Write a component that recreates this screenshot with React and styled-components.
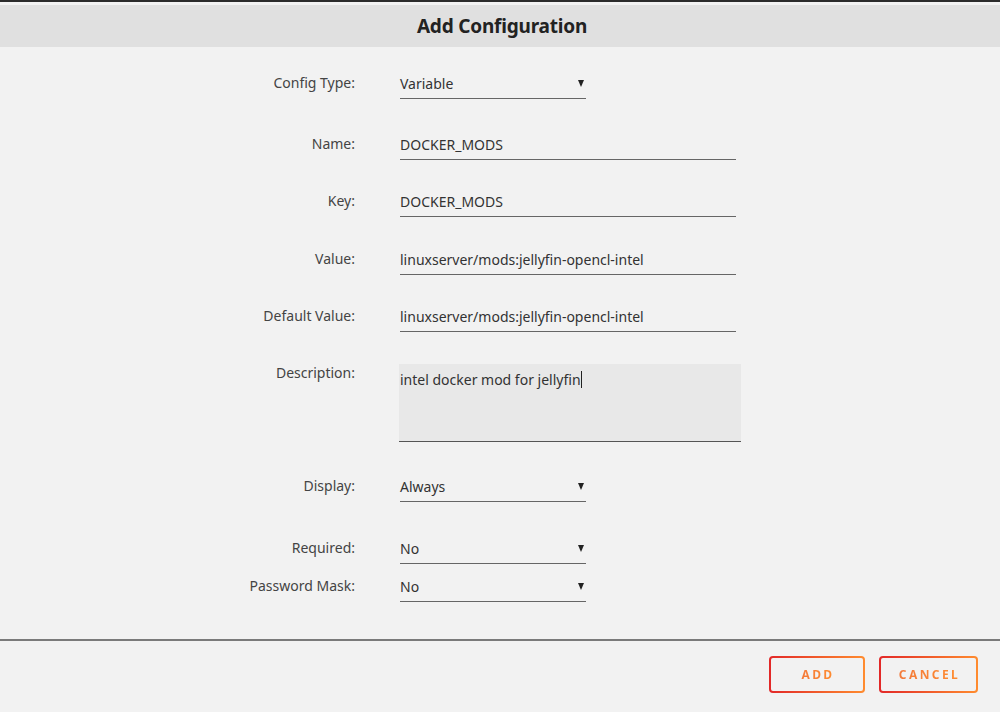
import React from "react";
import styled, { createGlobalStyle } from "styled-components";

const Global = createGlobalStyle`
  html, body { margin: 0; padding: 0; background: #f2f2f2; }
  body { font-family: "Noto Sans", "Liberation Sans", sans-serif; }
  * { box-sizing: border-box; }
`;

const Page = styled.div`
  width: 1000px;
  height: 712px;
  background: #f2f2f2;
  border-top: 2px solid #2b2b2b;
  display: flex;
  flex-direction: column;
  overflow: hidden;
`;

const Header = styled.div`
  margin-top: 3px;
  height: 42px;
  background: #e0e0e0;
  display: flex;
  align-items: center;
  justify-content: center;
  padding-left: 4px;
`;

const Title = styled.h2`
  margin: 0;
  font-size: 19px;
  font-weight: 700;
  color: #222;
  letter-spacing: -0.2px;
`;

const Form = styled.div`
  flex: 1;
  padding-top: 21px;
  display: flex;
  flex-direction: column;
`;

const Row = styled.div`
  display: grid;
  grid-template-columns: 355px auto;
  column-gap: 45px;
  align-items: ${(p) => (p.$top ? "start" : "center")};
  margin-top: ${(p) => p.$mt || 0}px;
`;

const Label = styled.label`
  text-align: right;
  font-size: 14px;
  color: #444;
  margin-top: ${(p) => (p.$top ? "-1px" : "-2px")};
`;

const Field = styled.div`
  width: ${(p) => p.$w}px;
  height: 31px;
  border-bottom: 1px solid #666;
  display: flex;
  align-items: center;
  justify-content: space-between;
  font-size: 14px;
  color: #333;
`;

const Arrow = styled.span`
  width: 0;
  height: 0;
  margin-right: 2px;
  border-left: 3.5px solid transparent;
  border-right: 3.5px solid transparent;
  border-top: 7px solid #222;
`;

const TextArea = styled.div`
  width: 342px;
  height: 78px;
  margin-left: -1px;
  background: #e8e8e8;
  border-bottom: 1px solid #555;
  padding: 6px 1px;
  font-size: 14px;
  color: #333;
`;

const Caret = styled.span`
  display: inline-block;
  width: 1px;
  height: 17px;
  background: #222;
  vertical-align: -3px;
`;

const Footer = styled.div`
  height: 73px;
  border-top: 2px solid #7a7a7a;
  display: flex;
  justify-content: flex-end;
  align-items: flex-start;
  gap: 14px;
  padding: 15px 22px 0 0;
`;

const Button = styled.button`
  width: ${(p) => p.$w}px;
  height: 37px;
  border: 2px solid transparent;
  border-radius: 4px;
  background:
    linear-gradient(#f2f2f2, #f2f2f2) padding-box,
    linear-gradient(90deg, #e22828 0%, #ff8c2f 100%) border-box;
  font-family: "Noto Sans", "Liberation Sans", sans-serif;
  font-size: 12px;
  font-weight: 700;
  letter-spacing: 2.4px;
  padding: 0 0 0 2px;
  cursor: pointer;
`;

const ButtonText = styled.span`
  background: linear-gradient(90deg, #f37a3a 0%, #ff8c2f 100%);
  -webkit-background-clip: text;
  background-clip: text;
  color: transparent;
`;

const Select = ({ value }) => (
  <Field $w={186}>
    <span>{value}</span>
    <Arrow />
  </Field>
);

export default function App() {
  return (
    <>
      <Global />
      <Page>
        <Header>
          <Title>Add Configuration</Title>
        </Header>
        <Form>
          <Row>
            <Label>Config Type:</Label>
            <Select value="Variable" />
          </Row>
          <Row $mt={30}>
            <Label>Name:</Label>
            <Field $w={336}>DOCKER_MODS</Field>
          </Row>
          <Row $mt={26}>
            <Label>Key:</Label>
            <Field $w={336}>DOCKER_MODS</Field>
          </Row>
          <Row $mt={27}>
            <Label>Value:</Label>
            <Field $w={336}>linuxserver/mods:jellyfin-opencl-intel</Field>
          </Row>
          <Row $mt={26}>
            <Label>Default Value:</Label>
            <Field $w={336}>linuxserver/mods:jellyfin-opencl-intel</Field>
          </Row>
          <Row $mt={32} $top>
            <Label $top>Description:</Label>
            <TextArea>
              intel docker mod for jellyfin
              <Caret />
            </TextArea>
          </Row>
          <Row $mt={29}>
            <Label>Display:</Label>
            <Select value="Always" />
          </Row>
          <Row $mt={31}>
            <Label>Required:</Label>
            <Select value="No" />
          </Row>
          <Row $mt={7}>
            <Label>Password Mask:</Label>
            <Select value="No" />
          </Row>
        </Form>
        <Footer>
          <Button $w={96}>
            <ButtonText>ADD</ButtonText>
          </Button>
          <Button $w={99}>
            <ButtonText>CANCEL</ButtonText>
          </Button>
        </Footer>
      </Page>
    </>
  );
}
